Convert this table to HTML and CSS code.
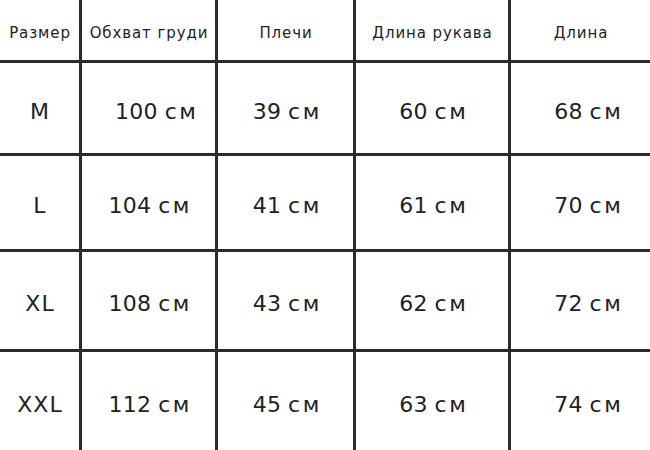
FILE: index.html
```html
<!DOCTYPE html>
<html lang="ru">
<head>
<meta charset="utf-8">
<link rel="stylesheet" href="styles.css">
</head>
<body>
<div class="chart">
  <div class="cell head">Размер</div>
  <div class="cell head">Обхват груди</div>
  <div class="cell head">Плечи</div>
  <div class="cell head">Длина рукава</div>
  <div class="cell head">Длина</div>

  <div class="cell size">M</div>
  <div class="cell shift">100 <span class="u">см</span></div>
  <div class="cell">39 <span class="u">см</span></div>
  <div class="cell">60 <span class="u">см</span></div>
  <div class="cell shift">68 <span class="u">см</span></div>

  <div class="cell size">L</div>
  <div class="cell">104 <span class="u">см</span></div>
  <div class="cell">41 <span class="u">см</span></div>
  <div class="cell">61 <span class="u">см</span></div>
  <div class="cell shift">70 <span class="u">см</span></div>

  <div class="cell size">XL</div>
  <div class="cell">108 <span class="u">см</span></div>
  <div class="cell">43 <span class="u">см</span></div>
  <div class="cell">62 <span class="u">см</span></div>
  <div class="cell shift">72 <span class="u">см</span></div>

  <div class="cell size">XXL</div>
  <div class="cell">112 <span class="u">см</span></div>
  <div class="cell">45 <span class="u">см</span></div>
  <div class="cell">63 <span class="u">см</span></div>
  <div class="cell shift">74 <span class="u">см</span></div>
</div>
</body>
</html>
```
FILE: styles.css
```css
html, body {
  margin: 0;
  padding: 0;
  background: #ffffff;
}
.chart {
  width: 650px;
  height: 450px;
  display: grid;
  grid-template-columns: 79px 133px 135px 152px 139px;
  grid-template-rows: 60px 90px 93px 97px 98px;
  gap: 3px;
  background: #2b2b2b;
  font-family: "DejaVu Sans", sans-serif;
  color: #222222;
}
.cell {
  background: #ffffff;
  display: flex;
  align-items: center;
  justify-content: center;
  gap: 7px;
  font-size: 22px;
  letter-spacing: 0.2px;
  padding-top: 6px;
  padding-left: 1px;
  box-sizing: border-box;
  white-space: nowrap;
}
.cell.size {
  letter-spacing: 1px;
}
.u {
  letter-spacing: 2.5px;
  margin-right: -2.5px;
}
.cell.head {
  font-size: 15px;
  letter-spacing: 0.9px;
  padding-top: 6px;
}
.cell.shift {
  padding-left: 14px;
}
```
